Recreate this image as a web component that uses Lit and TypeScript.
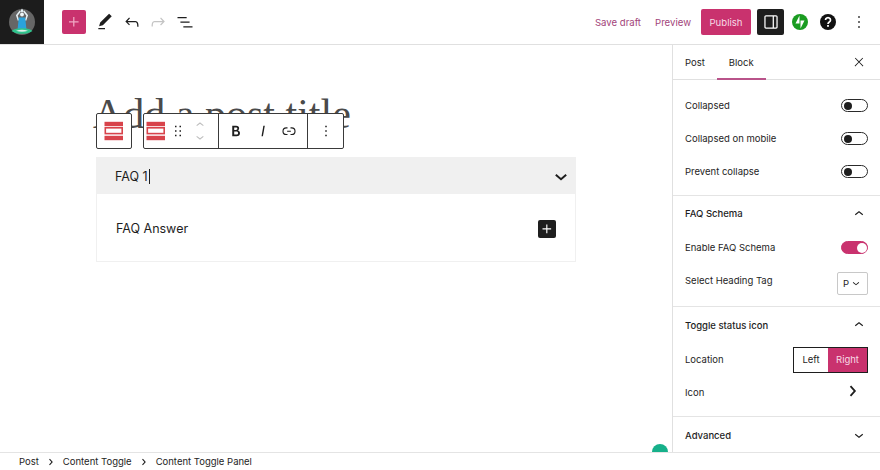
import { LitElement, html, css, svg } from "lit";
import { customElement } from "lit/decorators.js";

const ic = (d: string, size = 24, cls = "") =>
  html`<svg class=${cls} width=${size} height=${size} viewBox="0 0 24 24" fill="currentColor"><path d=${d}></path></svg>`;

const P = {
  plus: "M11 12.5V17.5H12.5V12.5H17.5V11H12.5V6H11V11H6V12.5H11Z",
  pencil: "M20.1 5.1L16.9 2 6.2 12.7l-1.3 4.4 4.5-1.3L20.1 5.1zM4 20.8h8v-1.5H4v1.5z",
  undo: "M18.3 11.7c-.6-.6-1.4-.9-2.3-.9H6.7l2.9-3.3-1.1-1-4.5 5L8.5 16l1-1-2.7-2.7H16c.5 0 .9.2 1.3.5 1 1 1 3.4 1 4.5v.3h1.5v-.2c0-1.5 0-4.3-1.5-5.7z",
  redo: "M15.6 6.5l-1.1 1 2.9 3.3H8c-.9 0-1.7.3-2.3.9-1.4 1.5-1.4 4.2-1.4 5.6v.2h1.5v-.3c0-1.1 0-3.5 1-4.5.3-.3.7-.5 1.3-.5h9.2L14.5 15l1.1 1.1 4.6-4.6-4.6-5z",
  list: "M3 6h11v1.5H3V6zm3.5 5.5h11V13h-11v-1.5zM21 17H10v1.5h11V17z",
  close: "M13 11.8l6.1-6.3-1-1-6.1 6.2-6.1-6.2-1 1 6.1 6.3-6.5 6.7 1 1 6.5-6.6 6.5 6.6 1-1z",
  more: "M13 19h-2v-2h2v2zm0-6h-2v-2h2v2zm0-6h-2V5h2v2z",
  drag: "M8 7h2V5H8v2zm0 6h2v-2H8v2zm0 6h2v-2H8v2zm6-14v2h2V5h-2zm0 8h2v-2h-2v2zm0 6h2v-2h-2v2z",
  upS: "M6.5 12.4L12 8l5.5 4.4-.9 1.2L12 10l-4.5 3.6-1-1.2z",
  downS: "M17.5 11.6L12 16l-5.5-4.4.9-1.2L12 14l4.5-3.6 1 1.2z",
  right: "M9.800 5.500L8.200 7l4.600 5-4.600 5 1.600 1.500 5.900-6.500z",
  bold: "M14.7 11.3c1-.6 1.5-1.6 1.5-3 0-2.3-1.3-3.4-4-3.4H7v14h5.8c1.4 0 2.5-.3 3.3-1 .8-.7 1.2-1.7 1.2-2.9.1-1.9-.8-3.1-2.6-3.7zm-5.1-4h2.3c.6 0 1.1.1 1.4.4.3.3.5.7.5 1.2s-.2 1-.5 1.2c-.3.3-.8.4-1.4.4H9.6V7.3zm4.6 9c-.4.3-1 .4-1.7.4H9.6v-3.9h2.9c.7 0 1.3.2 1.7.5.4.3.6.8.6 1.5s-.2 1.2-.6 1.5z",
  italic: "M12.5 5L10 19h1.9l2.5-14z",
  link: "M10 17.389H8.444A5.194 5.194 0 1 1 8.444 7H10v1.5H8.444a3.694 3.694 0 0 0 0 7.389H10v1.5ZM14 7h1.556a5.194 5.194 0 0 1 0 10.39H14v-1.5h1.556a3.694 3.694 0 0 0 0-7.39H14V7Zm-4.5 6h5v-1.5h-5V13Z",
  drawer: "M18 4H6c-1.1 0-2 .9-2 2v12c0 1.1.9 2 2 2h12c1.1 0 2-.9 2-2V6c0-1.1-.9-2-2-2zm-4 14.5H6c-.3 0-.5-.2-.5-.5V6c0-.3.2-.5.5-.5h8v13zm4.5-.5c0 .3-.2.5-.5.5h-2.5v-13H18c.3 0 .5.2.5.5v12z",
};

const blockIcon = html`<svg width="20" height="20" viewBox="0 0 20 20" fill="#d8434b">
  <rect x="0.5" y="0.8" width="18.5" height="4.4"></rect>
  <rect x="1.300" y="6.800" width="16.900" height="5.800" fill="none" stroke="#d8434b" stroke-width="1.600"></rect>
  <rect x="0.5" y="14.800" width="18.500" height="4.400"></rect>
</svg>`;

const logo = html`<svg width="44" height="44" viewBox="0 0 44 44">
  ${svg`<circle cx="22" cy="22" r="13" fill="#666"></circle>
  <path d="M22 8.500l-1.500 2.600a1.600 1.600 0 0 0 3 0z" fill="#e8f4f8"></path>
  <circle cx="22" cy="14.500" r="1.900" fill="#eef6f8"></circle>
  <path d="M18.500 20.500L16.800 15.500L20.300 11M25.500 20.500L27.200 15.500L23.700 11" fill="none" stroke="#e8f2f6" stroke-width="1.500"></path>
  <path d="M18.800 17.500h6.400l1.200 11.500h-8.800z" fill="#2aa3dc"></path>
  <path d="M11.500 31c3-2.400 6.500-2.800 10.500-2.800s7.500.4 10.500 2.800c-3 2.200-6.500 2.800-10.500 2.800s-7.500-.6-10.500-2.800z" fill="#2fc48d"></path>
  <path d="M16 30.800c2-.8 4-1.100 6-1.100s4 .3 6 1.100c-2 .7-4 1-6 1s-4-.3-6-1z" fill="#dff1ec"></path>`}
</svg>`;

const jetpack = html`<svg width="16" height="16" viewBox="0 0 32 32">
  <circle cx="16" cy="16" r="16" fill="#1a9c21"></circle>
  <polygon points="15,19 7,19 15,3" fill="#fff"></polygon>
  <polygon points="17,29 17,13 25,13" fill="#fff"></polygon>
</svg>`;

const help = html`<svg width="24" height="24" viewBox="0 0 24 24">
  <circle cx="12" cy="12" r="8" fill="#111"></circle>
  <path d="M9.500 10a2.500 2.300 0 1 1 3.800 2c-.9.600-1.300 1-1.300 2" fill="none" stroke="#fff" stroke-width="1.700"></path>
  <rect x="11.100" y="15" width="1.800" height="1.800" fill="#fff"></rect>
</svg>`;

@customElement("app-root")
export class AppRoot extends LitElement {
  static styles = css`
    :host {
      display: block;
      width: 880px;
      height: 470px;
      overflow: hidden;
      background: #fff;
      color: #1e1e1e;
      font-family: Inter, "Noto Sans", sans-serif;
      font-size: 9.5px;
    }
    * { box-sizing: border-box; }
    svg { display: block; flex: none; }
    .app { display: flex; flex-direction: column; height: 470px; }

    .top {
      height: 45px;
      flex: none;
      display: flex;
      align-items: center;
      border-bottom: 1px solid #e0e0e0;
    }
    .logo { width: 44px; height: 44px; background: #1c1c1c; }
    .add {
      margin-left: 18px;
      width: 24px;
      height: 24px;
      background: #c9326e;
      color: #f0a8c4;
      border-radius: 2px;
      display: flex;
      align-items: center;
      justify-content: center;
    }
    .tools { display: flex; margin-left: 7px; gap: 2.7px; }
    .tool { width: 24px; height: 24px; display: flex; align-items: center; justify-content: center; }
    .tool.off { color: #c4c4c4; }
    .spacer { flex: 1; }
    .link { color: #a2447a; font-size: 9.6px; }
    .save { margin-right: 14px; }
    .preview { margin-right: 10px; }
    .publish {
      width: 50px;
      height: 26px;
      background: #c9326e;
      color: #f7dbe6;
      border-radius: 2px;
      display: flex;
      align-items: center;
      justify-content: center;
      font-size: 9.6px;
    }
    .side-btn {
      margin-left: 6px;
      width: 27px;
      height: 26px;
      background: #1e1e1e;
      color: #fff;
      border-radius: 2px;
      display: flex;
      align-items: center;
      justify-content: center;
    }
    .jp { margin-left: 8px; }
    .help { margin-left: 8px; }
    .dots { margin-left: 9px; margin-right: 11px; }

    .main { flex: 1; display: flex; min-height: 0; position: relative; }
    .canvas { flex: 1; padding: 48px 96px 0; position: relative; }
    .title {
      font-family: "Liberation Serif", serif;
      font-size: 42px;
      line-height: 42px;
      color: #4a4a4a;
      height: 64px;
      margin-left: -3px;
      white-space: nowrap;
    }
    .toolbar {
      position: absolute;
      left: 96px;
      top: 68px;
      display: flex;
      gap: 11px;
    }
    .tb-group {
      display: flex;
      height: 36px;
      background: #fff;
      border: 1px solid #3a3a3a;
      border-radius: 2px;
      align-items: center;
    }
    .tb-first { width: 36px; justify-content: center; }
    .tb-main { width: 201px; }
    .seg { display: flex; align-items: center; height: 100%; }
    .seg-a { width: 74px; padding-left: 2px; }
    .seg-b { width: 89px; border-left: 1px solid #3a3a3a; padding-left: 4px; }
    .seg-c { flex: 1; border-left: 1px solid #3a3a3a; justify-content: center; }
    .drag { margin-left: 3px; width: 18px; }
    .movers { display: flex; flex-direction: column; margin-left: 5px; color: #bdbdbd; }
    .movers svg { margin: -2px 0; }
    .fmt { width: 27px; display: flex; justify-content: center; margin-left: -0.4px; }

    .block { width: 480px; }
    .bhead {
      height: 37px;
      background: #f0f0f0;
      display: flex;
      align-items: center;
      justify-content: space-between;
      padding: 1px 3px 0 19px;
      font-size: 12.5px;
    }
    .bhead svg { margin-top: 1px; }
    .caret { display: inline-block; width: 1px; height: 15px; background: #1e1e1e; vertical-align: -3px; margin-left: 1px; }
    .bbody {
      height: 68px;
      border: 1px solid #f0f0f0;
      border-top: 0;
      display: flex;
      align-items: center;
      justify-content: space-between;
      padding: 1px 19px 0 19px;
      font-size: 12.5px;
    }
    .appender {
      width: 18px;
      height: 18px;
      margin-top: 1px;
      background: #1e1e1e;
      color: #fff;
      border-radius: 2px;
      display: flex;
      align-items: center;
      justify-content: center;
    }

    .side { width: 208px; flex: none; border-left: 1px solid #e0e0e0; }
    .tabs {
      height: 35px;
      border-bottom: 1px solid #e0e0e0;
      display: flex;
      align-items: stretch;
      position: relative;
    }
    .tab { display: flex; align-items: center; padding: 0 12px; }
    .tab.on { position: relative; }
    .tab.on::after {
      content: "";
      position: absolute;
      left: 0;
      right: 0;
      bottom: -1px;
      height: 2px;
      background: #b9538a;
    }
    .tabs .x { margin-left: auto; margin-right: 14px; align-self: center; }
    .panel { border-bottom: 1px solid #e4e4e4; padding: 0 12px; }
    .p1 { height: 116px; padding-top: 9px; }
    .p2 { height: 111px; }
    .p3 { height: 110px; }
    .p4 { height: 36px; }
    .phead {
      height: 36px;
      display: flex;
      align-items: center;
      justify-content: space-between;
      font-weight: 500;
    }
    .p2 .phead { height: 35px; }
    .row { height: 33px; display: flex; align-items: center; justify-content: space-between; }
    .tog {
      width: 27px;
      height: 13px;
      border: 1px solid #2a2a2a;
      border-radius: 7px;
      position: relative;
      background: #fff;
    }
    .tog::after {
      content: "";
      position: absolute;
      left: 1.5px;
      top: 1.5px;
      width: 8px;
      height: 8px;
      border-radius: 50%;
      background: #1e1e1e;
    }
    .tog.on { background: #c9326e; border-color: #c9326e; }
    .tog.on::after { left: auto; right: 0.5px; top: 0.5px; width: 10px; height: 10px; background: #fff; }
    .sel {
      width: 31px;
      height: 23px;
      margin-top: 5px;
      border: 1px solid #c8c8c8;
      border-radius: 2px;
      display: flex;
      align-items: center;
      padding-left: 5px;
    }
    .segs { display: flex; width: 75px; height: 26px; border: 1px solid #1e1e1e; }
    .segs > div { display: flex; align-items: center; justify-content: center; }
    .segs .l { width: 34px; }
    .segs .r { flex: 1; background: #c9326e; color: #f7dbe6; }
    .iconr { margin-right: 5px; margin-bottom: 4px; }

    .crumbs {
      height: 18px;
      flex: none;
      border-top: 1px solid #e4e4e4;
      background: #fff;
      display: flex;
      align-items: center;
      padding-left: 19px;
      position: relative;
      z-index: 1;
    }
    .crumbs svg { margin: 0 6px; }
    .grammarly {
      position: absolute;
      right: 212px;
      bottom: -8px;
      width: 16px;
      height: 16px;
      border-radius: 50%;
      background: #16b08a;
    }
  `;

  render() {
    const toggle = (label: string, on = false) => html`
      <div class="row"><span>${label}</span><div class="tog ${on ? "on" : ""}"></div></div>`;
    const head = (label: string, d: string) => html`
      <div class="phead"><span>${label}</span>${ic(d, 18)}</div>`;
    const tool = (d: string, off = false) => html`<div class="tool ${off ? "off" : ""}">${ic(d, 20)}</div>`;
    const fmt = (d: string) => html`<div class="fmt">${ic(d, 18)}</div>`;
    return html`
      <div class="app">
        <header class="top">
          <div class="logo">${logo}</div>
          <div class="add">${ic(P.plus, 20)}</div>
          <div class="tools">
            ${tool(P.pencil)} ${tool(P.undo)} ${tool(P.redo, true)} ${tool(P.list)}
          </div>
          <div class="spacer"></div>
          <span class="link save">Save draft</span>
          <span class="link preview">Preview</span>
          <div class="publish">Publish</div>
          <div class="side-btn">${ic(P.drawer, 20)}</div>
          <div class="jp">${jetpack}</div>
          <div class="help">${help}</div>
          <div class="dots">${ic(P.more, 20)}</div>
        </header>
        <div class="main">
          <div class="canvas">
            <div class="title">Add a post title</div>
            <div class="toolbar">
              <div class="tb-group tb-first">${blockIcon}</div>
              <div class="tb-group tb-main">
                <div class="seg seg-a">
                  <div class="blk">${blockIcon}</div>
                  <div class="drag">${ic(P.drag, 18)}</div>
                  <div class="movers">${ic(P.upS, 16)} ${ic(P.downS, 16)}</div>
                </div>
                <div class="seg seg-b">${fmt(P.bold)} ${fmt(P.italic)} ${fmt(P.link)}</div>
                <div class="seg seg-c">${ic(P.more, 18)}</div>
              </div>
            </div>
            <div class="block">
              <div class="bhead">
                <span>FAQ 1<span class="caret"></span></span>
                <svg width="24" height="24" viewBox="0 0 24 24"><path d="M6.800 9.800L12 14.200l5.200-4.400" fill="none" stroke="#1e1e1e" stroke-width="2"></path></svg>
              </div>
              <div class="bbody">
                <span>FAQ Answer</span>
                <div class="appender">${ic(P.plus, 18)}</div>
              </div>
            </div>
          </div>
          <aside class="side">
            <div class="tabs">
              <div class="tab">Post</div>
              <div class="tab on">Block</div>
              <div class="x">${ic(P.close, 14)}</div>
            </div>
            <section class="panel p1">
              ${toggle("Collapsed")} ${toggle("Collapsed on mobile")} ${toggle("Prevent collapse")}
            </section>
            <section class="panel p2">
              ${head("FAQ Schema", P.upS)}
              ${toggle("Enable FAQ Schema", true)}
              <div class="row">
                <span>Select Heading Tag</span>
                <div class="sel"><span>P</span>${ic(P.downS, 14)}</div>
              </div>
            </section>
            <section class="panel p3">
              ${head("Toggle status icon", P.upS)}
              <div class="row">
                <span>Location</span>
                <div class="segs"><div class="l">Left</div><div class="r">Right</div></div>
              </div>
              <div class="row"><span>Icon</span><div class="iconr">${ic(P.right, 20)}</div></div>
            </section>
            <section class="panel p4">${head("Advanced", P.downS)}</section>
          </aside>
          <div class="grammarly"></div>
        </div>
        <footer class="crumbs">
          <span>Post</span>${ic(P.right, 12)}
          <span>Content Toggle</span>${ic(P.right, 12)}
          <span>Content Toggle Panel</span>
        </footer>
      </div>
    `;
  }
}
